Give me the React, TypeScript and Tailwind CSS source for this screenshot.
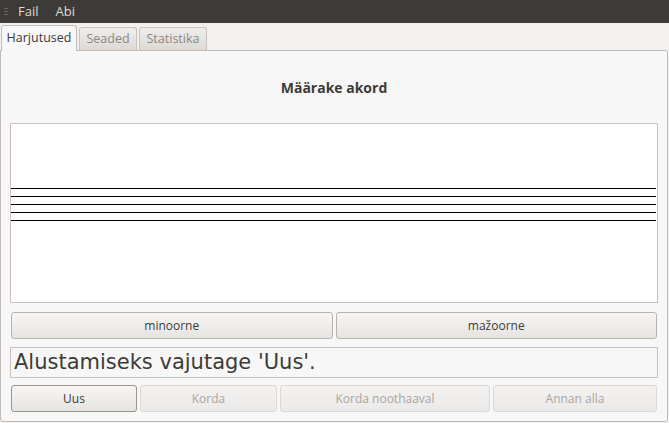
import React from "react";

const font = { fontFamily: '"Open Sans", "DejaVu Sans", sans-serif' };

function Btn({ children, w, disabled, focused }: { children: React.ReactNode; w: string; disabled?: boolean; focused?: boolean }) {
  return (
    <div
      className={`${w} h-[27px] flex items-center justify-center rounded-[3px] border text-[12px] bg-gradient-to-b ${
        focused
          ? "border-[#9a928c] text-[#3c3b37] from-[#f7f6f5] to-[#e6e4e1]"
          : disabled
          ? "border-[#dcd8d4] text-[#aaa5a0] from-[#f3f2f1] to-[#eceae8]"
          : "border-[#b9b1ab] text-[#3c3b37] from-[#f7f6f5] to-[#e6e4e1]"
      }`}
    >
      {children}
    </div>
  );
}

export default function App() {
  return (
    <div className="w-[669px] h-[423px] bg-[#f2f1f0] flex flex-col overflow-hidden" style={font}>
      <div className="h-[23px] bg-[#3c3b37] flex items-center text-[13px] text-[#dfdbd2]">
        <div className="w-[10px] flex flex-col items-center gap-[2px] pl-[2px]">
          <div className="w-[4px] h-[1px] bg-[#6a6862]" />
          <div className="w-[4px] h-[1px] bg-[#6a6862]" />
          <div className="w-[4px] h-[1px] bg-[#6a6862]" />
        </div>
        <span className="ml-[8px]">Fail</span>
        <span className="ml-[17px]">Abi</span>
      </div>
      <div className="flex items-end h-[27px] pl-[1px] gap-[2px] text-[12.5px]">
        <div className="h-[26px] w-[76px] bg-[#f7f7f7] border border-b-0 border-[#c3bbb5] rounded-t-[3px] flex items-center justify-center text-[#3c3b37] relative z-10 -mb-[1px]">
          Harjutused
        </div>
        <div className="h-[23px] w-[58px] bg-gradient-to-b from-[#efeeec] to-[#dcd9d5] border border-b-0 border-[#c9c2bd] rounded-t-[3px] flex items-center justify-center text-[#8c8782]">
          Seaded
        </div>
        <div className="h-[23px] w-[68px] bg-gradient-to-b from-[#efeeec] to-[#dcd9d5] border border-b-0 border-[#c9c2bd] rounded-t-[3px] flex items-center justify-center text-[#8c8782]">
          Statistika
        </div>
      </div>
      <div className="flex-1 mr-[1px] mb-[1px] bg-[#f7f7f7] border border-[#c3bbb5] rounded-b-[3px] rounded-tr-[3px] flex flex-col px-[9px]">
        <div className="h-[72px] flex items-center justify-center text-[14px] font-bold text-[#3c3b37]">Määrake akord</div>
        <div className="h-[180px] bg-white border border-[#c8c0bc] flex flex-col pt-[64px]">
          {[0, 1, 2, 3, 4].map((i) => (
            <div key={i} className="h-[1px] bg-black mb-[7px] mr-[1px]" />
          ))}
        </div>
        <div className="flex gap-[3px] mt-[9px] px-[1px]">
          <Btn w="flex-1">minoorne</Btn>
          <Btn w="flex-1">mažoorne</Btn>
        </div>
        <div
          className="mt-[8px] h-[31px] border border-[#c8c0bc] flex items-center pl-[3px] text-[21px] text-[#3c3b37]"
          style={{ fontFamily: '"DejaVu Sans", sans-serif' }}
        >
          Alustamiseks vajutage 'Uus'.
        </div>
        <div className="flex gap-[3px] mt-[7px] px-[1px]">
          <Btn w="w-[126px]" focused>Uus</Btn>
          <Btn w="w-[137px]" disabled>Korda</Btn>
          <Btn w="w-[210px]" disabled>Korda noothaaval</Btn>
          <Btn w="flex-1" disabled>Annan alla</Btn>
        </div>
      </div>
    </div>
  );
}
